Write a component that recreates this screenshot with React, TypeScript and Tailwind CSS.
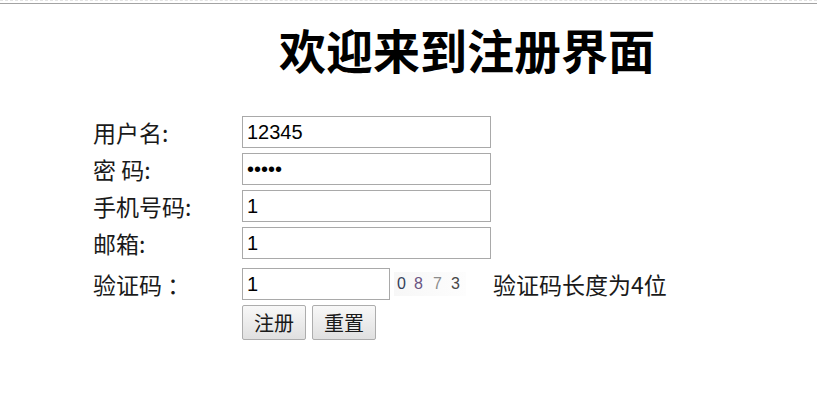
import React from 'react';

const cjk = "font-['Noto_Sans_CJK_SC',sans-serif]";
const latin = "font-['Liberation_Sans','Noto_Sans_CJK_SC',sans-serif]";

const fields = [
  { label: '用户名:', type: 'text', value: '12345' },
  { label: '密 码:', type: 'password', value: '12345' },
  { label: '手机号码:', type: 'text', value: '1' },
  { label: '邮箱:', type: 'text', value: '1' },
];

const captcha = [
  { d: '0', cls: 'text-[#34405a] w-[17px]' },
  { d: '8', cls: 'text-[#6a5482] w-[19px]' },
  { d: '7', cls: 'text-[#8c8c8c] w-[18px]' },
  { d: '3', cls: 'text-[#474747] w-[14px]' },
];

export default function App() {
  return (
    <div className="w-[817px] h-[403px] bg-white overflow-hidden">
      {/* browser chrome edge */}
      <div className="h-[3px] border-t border-dashed border-[#e4e4e4]" />
      <div className="h-px bg-[#a3a3a3]" />

      <h1 className={`${cjk} pl-[279px] mt-[21px] text-[47px] leading-[48px] font-bold text-black`}>
        欢迎来到注册界面
      </h1>

      <form className="mt-[43px] pl-[93px] flex flex-col" onSubmit={(e) => e.preventDefault()}>
        <div className="flex flex-col gap-[5px]">
          {fields.map((f, i) => (
            <div key={i} className="flex items-center h-[32px]">
              <label className={`${cjk} w-[149px] text-[23px] leading-none text-[#1a1a1a]`}>{f.label}</label>
              <input
                type={f.type}
                defaultValue={f.value}
                className={`${latin} w-[249px] h-[32px] border border-[#a9a9a9] px-[4px] text-[20px] text-black outline-none`}
              />
            </div>
          ))}
        </div>

        {/* captcha */}
        <div className="flex items-center h-[32px] mt-[9px]">
          <label className={`${cjk} w-[149px] text-[23px] leading-none text-[#1a1a1a]`}>验证码 ：</label>
          <input
            type="text"
            defaultValue="1"
            className={`${latin} w-[148px] h-[32px] border border-[#a9a9a9] px-[4px] text-[20px] text-black outline-none`}
          />
          <div className={`${latin} ml-[4px] h-[24px] w-[72px] pl-[3px] flex items-center bg-gradient-to-r from-[#f7f7f7] to-[#fdfdfd] text-[16px]`}>
            {captcha.map((c) => (
              <span key={c.d} className={c.cls}>{c.d}</span>
            ))}
          </div>
          <span className={`${cjk} ml-[27px] text-[23px] leading-none text-[#1a1a1a]`}>验证码长度为4位</span>
        </div>

        {/* buttons */}
        <div className="flex gap-[6px] mt-[5px] pl-[149px]">
          <button
            type="submit"
            className={`${cjk} w-[64px] h-[35px] border border-[#adadad] rounded-[2px] bg-gradient-to-b from-[#f8f8f8] to-[#e0e0e0] text-[20px] leading-none text-[#1a1a1a]`}
          >
            注册
          </button>
          <button
            type="reset"
            className={`${cjk} w-[64px] h-[35px] border border-[#adadad] rounded-[2px] bg-gradient-to-b from-[#f8f8f8] to-[#e0e0e0] text-[20px] leading-none text-[#1a1a1a]`}
          >
            重置
          </button>
        </div>
      </form>
    </div>
  );
}
